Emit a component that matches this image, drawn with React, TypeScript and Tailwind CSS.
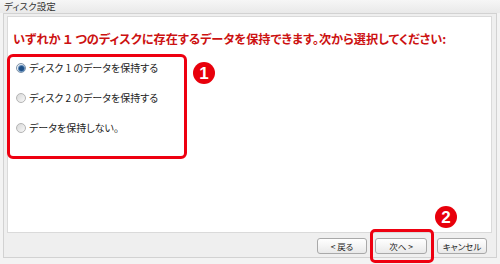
import React from 'react';

const jp = "font-['Noto_Sans_CJK_JP',sans-serif] [font-feature-settings:'palt']";

const Radio: React.FC<{ checked?: boolean; label: string }> = ({ checked, label }) => (
  <div className="flex h-[12px] items-center gap-[3px] pl-[8px]">
    <span
      className={
        checked
          ? 'flex h-[10px] w-[10px] items-center justify-center rounded-full border border-[#7f93a8] bg-gradient-to-b from-[#dfe6ee] to-[#ffffff]'
          : 'h-[10px] w-[10px] rounded-full border border-[#b4b4b4] bg-gradient-to-br from-[#d8d8d8] to-[#f8f8f8]'
      }
    >
      {checked && <span className="h-[5px] w-[5px] rounded-full bg-[#1d4f86] shadow-[0_0_0_1px_#5f8ab8]" />}
    </span>
    <span className="text-[10px] leading-[12px] text-[#222]">{label}</span>
  </div>
);

const Btn: React.FC<{ w: string; children: React.ReactNode }> = ({ w, children }) => (
  <div
    className={`${w} flex h-[16px] items-center justify-center rounded-[3px] border border-[#a9a9a9] bg-gradient-to-b from-[#ffffff] to-[#e9e9e9] text-[8.5px] leading-[10px] text-[#222]`}
  >
    {children}
  </div>
);

const Badge: React.FC<{ n: string; className: string }> = ({ n, className }) => (
  <div
    className={`absolute flex h-[22px] w-[22px] items-center justify-center rounded-full bg-[#e8000b] font-['Liberation_Sans',sans-serif] text-[17px] font-bold leading-none text-white ${className}`}
  >
    {n}
  </div>
);

export default function App() {
  return (
    <div className={`relative flex h-[264px] w-[500px] flex-col overflow-hidden bg-[#f3f3f3] ${jp}`}>
      {/* タイトルバー */}
      <div className="h-[13px] bg-gradient-to-b from-[#f6f6f6] to-[#e9e9e9] pl-[4px] text-[9.5px] leading-[13px] text-[#333]">
        ディスク設定
      </div>

      {/* ウィンドウ枠 */}
      <div className="mx-[3px] mb-[6px] flex h-[245px] flex-col border border-[#d2d2d2] bg-[#efefef]">
        <div className="ml-[3px] mr-[4px] mt-[2px] flex-1 border border-[#dadada] bg-white">
          <div className="whitespace-nowrap pl-[5px] pt-[15px] text-[12.2px] font-bold leading-[15px] text-[#cc1111]">
            いずれか １ つのディスクに存在するデータを保持できます。次から選択してください:
          </div>
          <div className="mt-[15px] flex flex-col gap-[18px]">
            <Radio checked label="ディスク 1 のデータを保持する" />
            <Radio label="ディスク 2 のデータを保持する" />
            <Radio label="データを保持しない。" />
          </div>
        </div>
        <div className="flex h-[24px] justify-end gap-[8px] pr-[9px] pt-[5px]">
          <Btn w="w-[50px]">&lt; 戻る</Btn>
          <Btn w="w-[52px]">次へ &gt;</Btn>
          <Btn w="w-[50px] ml-[2px]">キャンセル</Btn>
        </div>
      </div>

      {/* 注釈 */}
      <div className="absolute left-[7px] top-[54px] h-[105px] w-[180px] rounded-[6px] border-[3px] border-[#ee0010]" />
      <div className="absolute left-[370px] top-[229px] h-[34px] w-[64px] rounded-[5px] border-[3px] border-[#ee0010]" />
      <Badge n="1" className="left-[193px] top-[62px]" />
      <Badge n="2" className="left-[435px] top-[206px]" />
    </div>
  );
}
